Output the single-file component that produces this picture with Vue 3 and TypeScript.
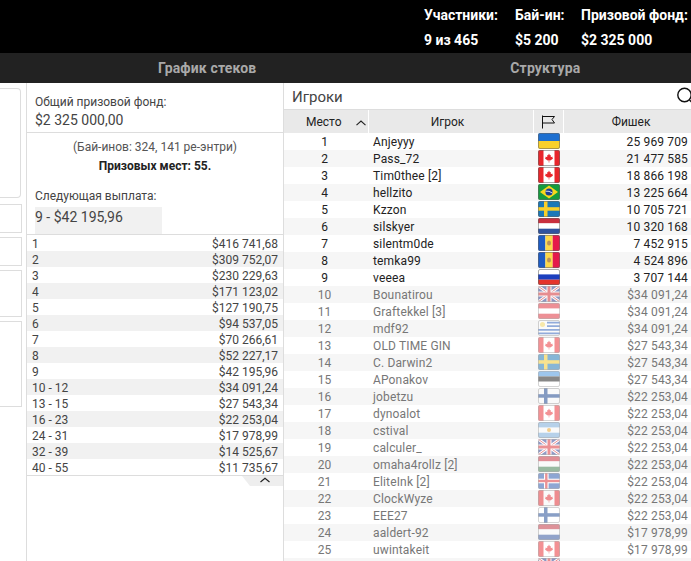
<script setup lang="ts">
type Flag = 'ua' | 'ca' | 'br' | 'se' | 'nl' | 'md' | 'ru' | 'gb' | 'at' | 'uy' | 'ee' | 'fi' | 'ar' | 'hu' | 'is'
interface Player { name: string; flag: Flag; chips: string }
const players: Player[] = [
  { name: 'Anjeyyy', flag: 'ua', chips: '25 969 709' },
  { name: 'Pass_72', flag: 'ca', chips: '21 477 585' },
  { name: 'Tim0thee [2]', flag: 'ca', chips: '18 866 198' },
  { name: 'hellzito', flag: 'br', chips: '13 225 664' },
  { name: 'Kzzon', flag: 'se', chips: '10 705 721' },
  { name: 'silskyer', flag: 'nl', chips: '10 320 168' },
  { name: 'silentm0de', flag: 'md', chips: '7 452 915' },
  { name: 'temka99', flag: 'md', chips: '4 524 896' },
  { name: 'veeea', flag: 'ru', chips: '3 707 144' },
  { name: 'Bounatirou', flag: 'gb', chips: '$34 091,24' },
  { name: 'Graftekkel [3]', flag: 'at', chips: '$34 091,24' },
  { name: 'mdf92', flag: 'uy', chips: '$34 091,24' },
  { name: 'OLD TIME GIN', flag: 'ca', chips: '$27 543,34' },
  { name: 'C. Darwin2', flag: 'se', chips: '$27 543,34' },
  { name: 'APonakov', flag: 'ee', chips: '$27 543,34' },
  { name: 'jobetzu', flag: 'fi', chips: '$22 253,04' },
  { name: 'dynoalot', flag: 'ca', chips: '$22 253,04' },
  { name: 'cstival', flag: 'ar', chips: '$22 253,04' },
  { name: 'calculer_', flag: 'gb', chips: '$22 253,04' },
  { name: 'omaha4rollz [2]', flag: 'hu', chips: '$22 253,04' },
  { name: 'EliteInk [2]', flag: 'is', chips: '$22 253,04' },
  { name: 'ClockWyze', flag: 'ca', chips: '$22 253,04' },
  { name: 'EEE27', flag: 'fi', chips: '$22 253,04' },
  { name: 'aaldert-92', flag: 'nl', chips: '$17 978,99' },
  { name: 'uwintakeit', flag: 'ca', chips: '$17 978,99' },
  { name: '', flag: 'gb', chips: '' },
]
const payouts: [string, string][] = [
  ['1', '$416 741,68'], ['2', '$309 752,07'], ['3', '$230 229,63'], ['4', '$171 123,02'],
  ['5', '$127 190,75'], ['6', '$94 537,05'], ['7', '$70 266,61'], ['8', '$52 227,17'],
  ['9', '$42 195,96'], ['10 - 12', '$34 091,24'], ['13 - 15', '$27 543,34'], ['16 - 23', '$22 253,04'],
  ['24 - 31', '$17 978,99'], ['32 - 39', '$14 525,67'], ['40 - 55', '$11 735,67'],
]
const sideBoxes = ['b1', 'b2', 'b3', 'b4', 'b5']
</script>

<template>
  <div class="page">
    <header class="top">
      <div class="stat s1"><b>Участники:</b><b>9 из 465</b></div>
      <div class="stat s2"><b>Бай-ин:</b><b>$5 200</b></div>
      <div class="stat s3"><b>Призовой фонд:</b><b>$2 325 000</b></div>
    </header>
    <nav class="tabs">
      <span class="tab t1">График стеков</span>
      <span class="tab t2">Структура</span>
    </nav>
    <main class="body">
      <aside class="side">
        <div v-for="b in sideBoxes" :key="b" class="sbox" :class="b"></div>
      </aside>
      <section class="prize">
        <div class="pool">
          <div class="lbl">Общий призовой фонд:</div>
          <div class="val">$2 325 000,00</div>
        </div>
        <div class="info">
          <div class="entries">(Бай-инов: 324, 141 ре-энтри)</div>
          <div class="places">Призовых мест: 55.</div>
          <div class="lbl next">Следующая выплата:</div>
          <div class="nextval">9 - $42 195,96</div>
        </div>
        <div class="pays">
          <div v-for="p in payouts" :key="p[0]" class="pay">
            <span>{{ p[0] }}</span><span>{{ p[1] }}</span>
          </div>
        </div>
        <div class="collapse">
          <svg width="12" height="6" viewBox="0 0 12 6"><path d="M1.5 5 L6 1.2 L10.5 5" fill="none" stroke="#222" stroke-width="1.2"/></svg>
        </div>
      </section>
      <section class="players">
        <div class="ptitle">
          <span>Игроки</span>
          <svg class="search" width="20" height="20" viewBox="0 0 20 20"><circle cx="7.5" cy="8" r="6.7" fill="none" stroke="#111" stroke-width="1.4"/><path d="M12.5 13 L18 18.5" stroke="#111" stroke-width="1.4"/></svg>
        </div>
        <div class="thead">
          <div class="th c-place">Место
            <svg class="sort" width="12" height="6" viewBox="0 0 12 6"><path d="M1.5 5.2 L6 1 L10.5 5.2" fill="none" stroke="#222" stroke-width="1.1"/></svg>
          </div>
          <div class="th c-name">Игрок</div>
          <div class="th c-flag">
            <svg width="15" height="14" viewBox="0 0 15 14"><path d="M1.5 0.5 V13.5 M1.5 1.5 H13.5 L11 4.5 L13.5 8 H1.5" fill="none" stroke="#111" stroke-width="1"/></svg>
          </div>
          <div class="th c-chips">Фишек</div>
        </div>
        <div class="rows">
          <div v-for="(p, i) in players" :key="i" class="row" :class="{ out: i >= 9 }">
            <div class="c-place num">{{ i < 25 ? i + 1 : '' }}</div>
            <div class="c-name nm">{{ p.name }}</div>
            <div class="c-flag fl">
              <svg class="flag" width="22" height="16" viewBox="0 0 22 16">
                <g v-if="p.flag === 'ua'"><rect width="22" height="8" fill="#1d6fd0"/><rect y="8" width="22" height="8" fill="#f8d02c"/></g>
                <g v-else-if="p.flag === 'ca'"><rect width="22" height="16" fill="#fff"/><rect width="5.5" height="16" fill="#e8262c"/><rect x="16.5" width="5.5" height="16" fill="#e8262c"/><path d="M11 3.5 L12 5.5 L13 5 L12.7 7 L14.8 6.7 L14.3 8 L15.2 8.6 L12.3 10.5 L11.3 10.3 V12.5 H10.7 V10.3 L9.7 10.5 L6.8 8.6 L7.7 8 L7.2 6.7 L9.3 7 L9 5 L10 5.5 Z" fill="#e8262c"/></g>
                <g v-else-if="p.flag === 'br'"><rect width="22" height="16" fill="#169b3e"/><path d="M11 1.5 L20 8 L11 14.5 L2 8 Z" fill="#f8d81c"/><circle cx="11" cy="8" r="3.6" fill="#1c3f94"/><path d="M7.6 7.2 Q11 6.6 14.4 9" stroke="#fff" stroke-width="0.8" fill="none"/></g>
                <g v-else-if="p.flag === 'se'"><rect width="22" height="16" fill="#1a78b8"/><rect x="6" width="3.5" height="16" fill="#f8cf2a"/><rect y="6.2" width="22" height="3.5" fill="#f8cf2a"/></g>
                <g v-else-if="p.flag === 'nl'"><rect width="22" height="5.4" fill="#c8303e"/><rect y="5.4" width="22" height="5.3" fill="#fff"/><rect y="10.7" width="22" height="5.3" fill="#2f539f"/></g>
                <g v-else-if="p.flag === 'md'"><rect width="7.4" height="16" fill="#1d5cc4"/><rect x="7.4" width="7.3" height="16" fill="#fcd84a"/><rect x="14.7" width="7.3" height="16" fill="#e5194a"/><ellipse cx="11" cy="8" rx="2" ry="2.6" fill="#b9925a"/></g>
                <g v-else-if="p.flag === 'ru'"><rect width="22" height="5.4" fill="#fff"/><rect y="5.4" width="22" height="5.3" fill="#1c3fbe"/><rect y="10.7" width="22" height="5.3" fill="#e5342c"/></g>
                <g v-else-if="p.flag === 'gb'"><rect width="22" height="16" fill="#24378f"/><path d="M0 0 L22 16 M22 0 L0 16" stroke="#fff" stroke-width="3"/><path d="M0 0 L22 16 M22 0 L0 16" stroke="#d8262c" stroke-width="1"/><path d="M11 0 V16 M0 8 H22" stroke="#fff" stroke-width="5"/><path d="M11 0 V16 M0 8 H22" stroke="#d8262c" stroke-width="3"/></g>
                <g v-else-if="p.flag === 'at'"><rect width="22" height="16" fill="#dc2430"/><rect y="5.4" width="22" height="5.3" fill="#fff"/></g>
                <g v-else-if="p.flag === 'uy'"><rect width="22" height="16" fill="#fff"/><path d="M9 2.6 H22 M9 6.2 H22 M0 9.8 H22 M0 13.4 H22" stroke="#2f63c0" stroke-width="1.8"/><circle cx="4.5" cy="4.5" r="2.5" fill="#f8dc60"/></g>
                <g v-else-if="p.flag === 'ee'"><rect width="22" height="5.4" fill="#3d8fdc"/><rect y="5.4" width="22" height="5.3" fill="#111"/><rect y="10.7" width="22" height="5.3" fill="#fff"/></g>
                <g v-else-if="p.flag === 'fi'"><rect width="22" height="16" fill="#fff"/><rect x="6" width="3.5" height="16" fill="#16428f"/><rect y="6.2" width="22" height="3.5" fill="#16428f"/></g>
                <g v-else-if="p.flag === 'ar'"><rect width="22" height="16" fill="#fff"/><rect width="22" height="5.4" fill="#78aee0"/><rect y="10.7" width="22" height="5.3" fill="#78aee0"/><circle cx="11" cy="8" r="2" fill="#f0a828"/></g>
                <g v-else-if="p.flag === 'hu'"><rect width="22" height="5.4" fill="#ce2939"/><rect y="5.4" width="22" height="5.3" fill="#fff"/><rect y="10.7" width="22" height="5.3" fill="#3f7f4f"/></g>
                <g v-else-if="p.flag === 'is'"><rect width="22" height="16" fill="#1f4fa8"/><rect x="6" width="4.6" height="16" fill="#fff"/><rect y="5.7" width="22" height="4.6" fill="#fff"/><rect x="7.1" width="2.4" height="16" fill="#d8262c"/><rect y="6.8" width="22" height="2.4" fill="#d8262c"/></g>
              </svg>
            </div>
            <div class="c-chips ch">{{ p.chips }}</div>
          </div>
        </div>
      </section>
    </main>
  </div>
</template>

<style>
html, body { margin: 0; overflow: hidden; background: #fff; }
</style>

<style scoped>
.page { width: 691px; height: 561px; overflow: hidden; font-family: Roboto, "Liberation Sans", sans-serif; color: #222; }
.top { height: 53px; background: #000; color: #fff; display: flex; font-size: 14px; box-sizing: border-box; padding-top: 6px; }
.stat { display: flex; flex-direction: column; gap: 7px; line-height: 18px; white-space: nowrap; }
.s1 { margin-left: 424px; width: 91px; }
.s2 { width: 66px; }
.top b { font-weight: 700; }
.tabs { height: 30px; background: #222; color: #a9a9a9; font-size: 14px; font-weight: 700; letter-spacing: .15px; display: flex; align-items: center; }
.tab { white-space: nowrap; }
.t1 { margin-left: 158px; }
.t2 { margin-left: 254px; }
.body { display: flex; height: 478px; }
.side { width: 26px; flex: none; border-right: 1px solid #ddd; }
.sbox { border: 1px solid #ddd; border-left: 0; box-sizing: border-box; width: 22px; background: #fff; }
.b1 { height: 110px; width: 21px; margin-top: 5px; border-radius: 0 4px 4px 0; margin-bottom: 6px; }
.b2 { height: 29px; margin-bottom: 4px; }
.b3 { height: 29px; margin-bottom: 4px; }
.b4 { height: 47px; margin-bottom: 4px; }
.b5 { height: 86px; }
.prize { width: 256px; flex: none; border-right: 1px solid #ddd; font-size: 12px; position: relative; }
.pool { padding: 11px 8px 0; height: 50px; box-sizing: border-box; border-bottom: 1px solid #ddd; color: #444; }
.lbl { font-size: 12px; line-height: 16px; color: #444; }
.val { font-size: 14px; line-height: 20px; color: #444; }
.info { height: 102px; box-sizing: border-box; border-bottom: 1px solid #ddd; }
.entries { text-align: center; color: #555; line-height: 16px; padding-top: 6px; }
.places { text-align: center; font-weight: 700; color: #222; line-height: 16px; margin-top: 3px; }
.next { margin: 14px 0 0 8px; }
.nextval { margin: 3px 0 0 8px; width: 127px; height: 27px; background: #f1f1f1; font-size: 14px; line-height: 20px; color: #444; }
.pays { border-bottom: 1px solid #ddd; }
.pay { display: flex; justify-content: space-between; height: 16px; line-height: 18px; padding: 0 5px; color: #444; }
.pay:nth-child(even) { background: #f1f1f1; }
.collapse { position: absolute; right: 0; top: 393px; width: 41px; height: 10px; box-sizing: border-box; padding-left: 5px; background: #eee; clip-path: polygon(8px 100%, 0 0, 100% 0, 100% 100%); display: flex; justify-content: center; }
.collapse svg { margin-top: 1px; }
.players { flex: 1; min-width: 0; }
.ptitle { height: 27px; display: flex; align-items: center; padding: 1px 0 0 8px; font-size: 15px; color: #444; border-bottom: 1px solid #ddd; box-sizing: border-box; position: relative; }
.search { position: absolute; left: 393px; top: 4px; }
.thead { display: flex; height: 23px; background: #fff; font-size: 12px; color: #222; }
.th { background: #e9e9e9; display: flex; align-items: center; justify-content: center; position: relative; margin-right: 1px; }
.c-place { width: 84px; flex: none; }
.c-name { width: 164px; flex: none; }
.c-flag { width: 29px; flex: none; }
.c-chips { width: 128px; flex: none; }
.th.c-place { justify-content: flex-start; padding-left: 22px; box-sizing: border-box; }
.th.c-name { box-sizing: border-box; padding-right: 7px; }
.th.c-chips { box-sizing: border-box; padding-left: 6px; }
.sort { position: absolute; right: 1px; top: 10px; }
.row { display: flex; height: 17px; font-size: 12px; line-height: 19px; color: #222; }
.row:nth-child(even) { background: #f6f6f6; }
.num { text-align: center; width: 85px; padding-right: 4px; box-sizing: border-box; }
.nm { padding-left: 4px; width: 165px; box-sizing: content-box; width: 161px; color: #222; letter-spacing: .15px; }
.fl { width: 30px; }
.flag { display: block; margin-left: 4px; border-radius: 2px; outline: 1px solid rgba(100,100,100,.55); outline-offset: -1px; }
.ch { text-align: right; width: 125px; box-sizing: border-box; padding-right: 1px; letter-spacing: .15px; }
.out .num, .out .nm, .out .ch { color: #777; }
.out .flag { opacity: .5; }
</style>
